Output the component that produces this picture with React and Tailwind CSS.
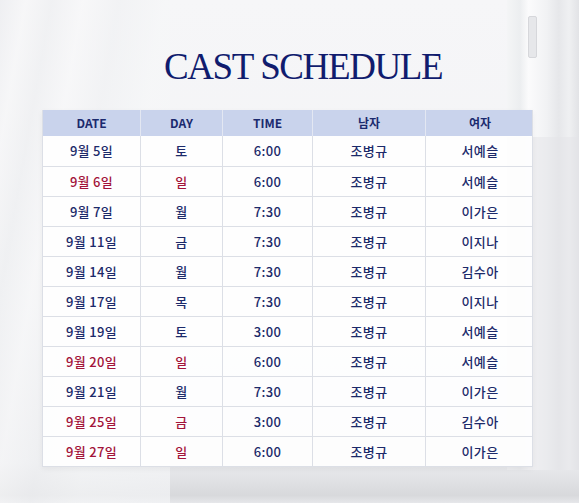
import React from "react";

const rows = [
  ["9월 5일", "토", "6:00", "조병규", "서예슬", false],
  ["9월 6일", "일", "6:00", "조병규", "서예슬", true],
  ["9월 7일", "월", "7:30", "조병규", "이가은", false],
  ["9월 11일", "금", "7:30", "조병규", "이지나", false],
  ["9월 14일", "월", "7:30", "조병규", "김수아", false],
  ["9월 17일", "목", "7:30", "조병규", "이지나", false],
  ["9월 19일", "토", "3:00", "조병규", "서예슬", false],
  ["9월 20일", "일", "6:00", "조병규", "서예슬", true],
  ["9월 21일", "월", "7:30", "조병규", "이가은", false],
  ["9월 25일", "금", "3:00", "조병규", "김수아", true],
  ["9월 27일", "일", "6:00", "조병규", "이가은", true],
];

const heads = ["DATE", "DAY", "TIME", "남자", "여자"];

export default function App() {
  return (
    <div className="relative w-[579px] h-[503px] overflow-hidden bg-[linear-gradient(180deg,#f6f6f8_0%,#f2f3f5_60%,#eaebee_92%,#d8d9dc_98.5%,#e6e7ea_100%)] font-['Noto_Sans_CJK_KR','Noto_Sans',sans-serif]">
      {/* decorative background: curtain & door */}
      <div className="absolute left-0 top-0 w-[170px] h-full bg-[linear-gradient(100deg,#ebecef_0%,#f7f7f8_10%,#eeeff1_20%,#f8f8f9_32%,#f0f1f3_46%,#f6f7f8_64%,#f4f5f7_100%)] opacity-70" />
      <div className="absolute right-0 top-0 w-[72px] h-[470px] bg-[linear-gradient(90deg,#f4f5f6_0%,#eceef0_18%,#fbfbfc_30%,#f1f2f4_55%,#e6e7ea_72%,#eff0f2_86%,#e2e3e6_100%)]" />
      <div className="absolute right-[42px] top-[16px] w-[9px] h-[42px] rounded-[2px] bg-[#e6e7ea] border border-[#d6d7db]" />
      <div className="absolute right-0 w-[72px] top-[137px] h-[333px] bg-[#e3e4e7]/50" />

      <div className="relative flex flex-col">
        <div className="pt-[46px] pl-[164px] h-[110px]">
          <h1 className="font-['Liberation_Serif',serif] text-[37px] leading-[42px] tracking-[-1.4px] text-[#101c6e] whitespace-nowrap">
            CAST SCHEDULE
          </h1>
        </div>
        <div className="ml-[42px] w-[491px] border-l border-r border-b border-[#dcdfe6] bg-white/90 shadow-[0_2px_6px_rgba(0,0,0,0.05)]">
          <div className="grid grid-cols-[98px_82px_90px_113px_108px] h-[26px] bg-[#c9d3ec]">
            {heads.map((h, i) => (
              <div
                key={h}
                className={`flex items-center justify-center text-[12px] font-bold text-[#1b2a6e] ${i < 4 ? "border-r border-[#e3e7f2]" : ""}`}
              >
                {h}
              </div>
            ))}
          </div>
          {rows.map((r, ri) => (
            <div
              key={ri}
              className={`grid grid-cols-[98px_82px_90px_113px_108px] h-[30px] ${ri > 0 ? "border-t border-[#dcdfe6]" : ""}`}
            >
              {r.slice(0, 5).map((c, ci) => {
                const red = r[5] && ci < 2;
                return (
                  <div
                    key={ci}
                    className={`flex items-center justify-center text-[13px] font-medium tracking-[0.3px] ${red ? "text-[#a3143a]" : "text-[#1c2a6a]"} ${ci < 4 ? "border-r border-[#dcdfe6]" : ""}`}
                  >
                    {c}
                  </div>
                );
              })}
            </div>
          ))}
        </div>
      </div>
    </div>
  );
}
